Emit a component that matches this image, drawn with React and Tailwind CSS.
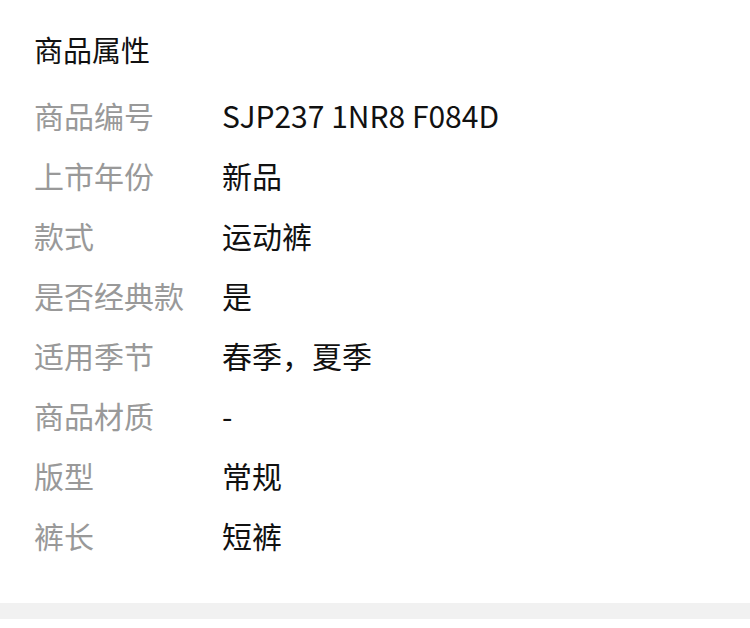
import React from "react";

const rows = [
  ["商品编号", "SJP237 1NR8 F084D"],
  ["上市年份", "新品"],
  ["款式", "运动裤"],
  ["是否经典款", "是"],
  ["适用季节", "春季，夏季"],
  ["商品材质", "-"],
  ["版型", "常规"],
  ["裤长", "短裤"],
];

export default function App() {
  return (
    <div
      className="w-[750px] h-[628px] bg-white overflow-hidden"
      style={{ fontFamily: '"Noto Sans CJK SC", "Noto Sans", sans-serif' }}
    >
      <div className="px-[34px] pt-5 pb-[38px]">
        <div className="h-[60px] flex items-center text-[29px] text-[#111]">
          商品属性
        </div>
        <div className="mt-[5px]">
          {rows.map(([label, value]) => (
            <div key={label} className="h-[60px] flex items-center text-[30px]">
              <div className="w-[188px] shrink-0 text-[#999]">{label}</div>
              <div className="text-[#111]">{value}</div>
            </div>
          ))}
        </div>
      </div>
      <div className="h-4 bg-[#f1f1f1]" />
    </div>
  );
}
